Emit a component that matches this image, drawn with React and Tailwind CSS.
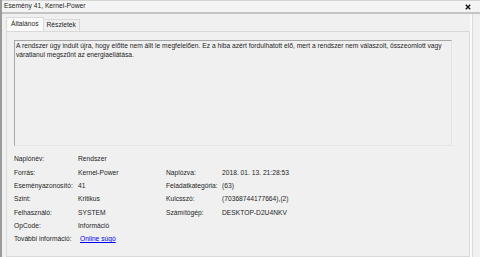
import React from 'react';

const rows = [
  { label: 'Naplónév:', value: 'Rendszer' },
  { label: 'Forrás:', value: 'Kernel-Power', label2: 'Naplózva:', value2: '2018. 01. 13. 21:28:53' },
  { label: 'Eseményazonosító:', value: '41', label2: 'Feladatkategória:', value2: '(63)' },
  { label: 'Szint:', value: 'Kritikus', label2: 'Kulcsszó:', value2: '(70368744177664),(2)' },
  { label: 'Felhasználó:', value: 'SYSTEM', label2: 'Számítógép:', value2: 'DESKTOP-D2U4NKV' },
  { label: 'OpCode:', value: 'Információ' },
];

const App = () => {
  return (
    <div className="w-[480px] h-[257px] overflow-hidden bg-[#f0f0f0] flex text-[6.7px] leading-[8.5px] text-[#1e1e1e] font-['Liberation_Sans',Arial,sans-serif]">
      <div className="w-[2px] bg-[#9a9a9a] shrink-0" />
      <div className="flex-1 flex flex-col">
        <div className="h-[12px] border-t border-[#d4d4d4] flex items-center justify-between pl-[2px] pr-[9px] bg-[#f4f4f4]">
          <span>Esemény 41, Kernel-Power</span>
          <svg width="6" height="6" viewBox="0 0 6 6">
            <path d="M0.8 0.8 L5.2 5.2 M5.2 0.8 L0.8 5.2" stroke="#111" strokeWidth="1.4" />
          </svg>
        </div>
        <div className="h-[2px] bg-[#c4c4c4]" />
        <div className="flex-1 flex">
          <div className="flex-1 flex flex-col pl-[4px] pt-[3px]">
            <div className="flex items-end h-[14px]">
              <div className="h-[14px] px-[4px] bg-[#fbfbfb] border border-b-0 border-[#d9d9d9] flex items-center">Általános</div>
              <div className="h-[12px] px-[3px] border-t border-r border-[#d9d9d9] flex items-center">Részletek</div>
            </div>
            <div className="flex-1 border border-[#d9d9d9] bg-[#f0f0f0] pl-[7px] pr-[17px] pt-[8px]">
              <div className="h-[106px] border-t border-l border-[#a6a6a6] border-r border-b border-r-[#e4e4e4] border-b-[#e4e4e4] pl-[1px] pt-[1px]">
                A rendszer úgy indult újra, hogy előtte nem állt le megfelelően. Ez a hiba azért fordulhatott elő, mert a rendszer nem válaszolt, összeomlott vagy váratlanul megszűnt az energiaellátása.
              </div>
              <div className="mt-[7px] flex flex-col">
                {rows.map((r) => (
                  <div key={r.label} className="h-[13.3px] flex items-center">
                    <span className="w-[64px] shrink-0">{r.label}</span>
                    <span className="w-[88px] shrink-0">{r.value}</span>
                    {r.label2 && <span className="w-[56px] shrink-0">{r.label2}</span>}
                    {r.value2 && <span>{r.value2}</span>}
                  </div>
                ))}
                <div className="h-[13.3px] flex items-center">
                  <span className="w-[66px]">További információ:</span>
                  <span className="text-[#0000ee] underline">Online súgó</span>
                </div>
              </div>
            </div>
          </div>
          <div className="w-[10px] flex">
            <div className="w-[2px] bg-[#fafafa]" />
            <div className="w-[1px] bg-[#dcdcdc]" />
          </div>
        </div>
      </div>
    </div>
  );
};

export default App;
